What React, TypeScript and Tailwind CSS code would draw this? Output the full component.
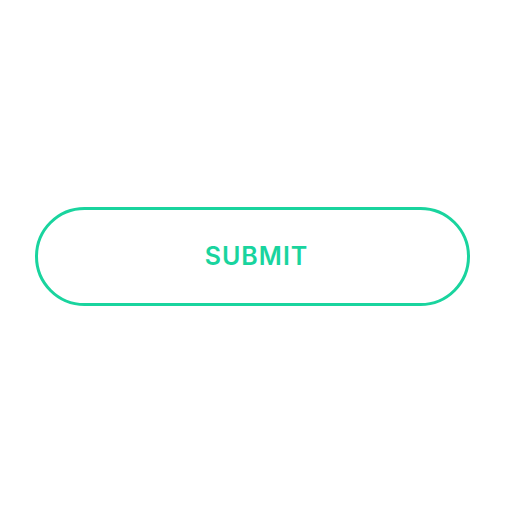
export default function App() {
  return (
    <div className="w-[512px] h-[512px] bg-white flex items-center justify-center pr-[7px]">
      <button className="w-[435px] h-[99px] rounded-full border-[3.5px] border-[#19d49e] bg-white flex items-center justify-center">
        <span
          className="text-[25px] font-semibold tracking-[1px] text-[#19d49e] pl-[8px] mt-[1px] leading-none"
          style={{ fontFamily: 'Inter, "Liberation Sans", Arial, sans-serif' }}
        >
          SUBMIT
        </span>
      </button>
    </div>
  );
}
